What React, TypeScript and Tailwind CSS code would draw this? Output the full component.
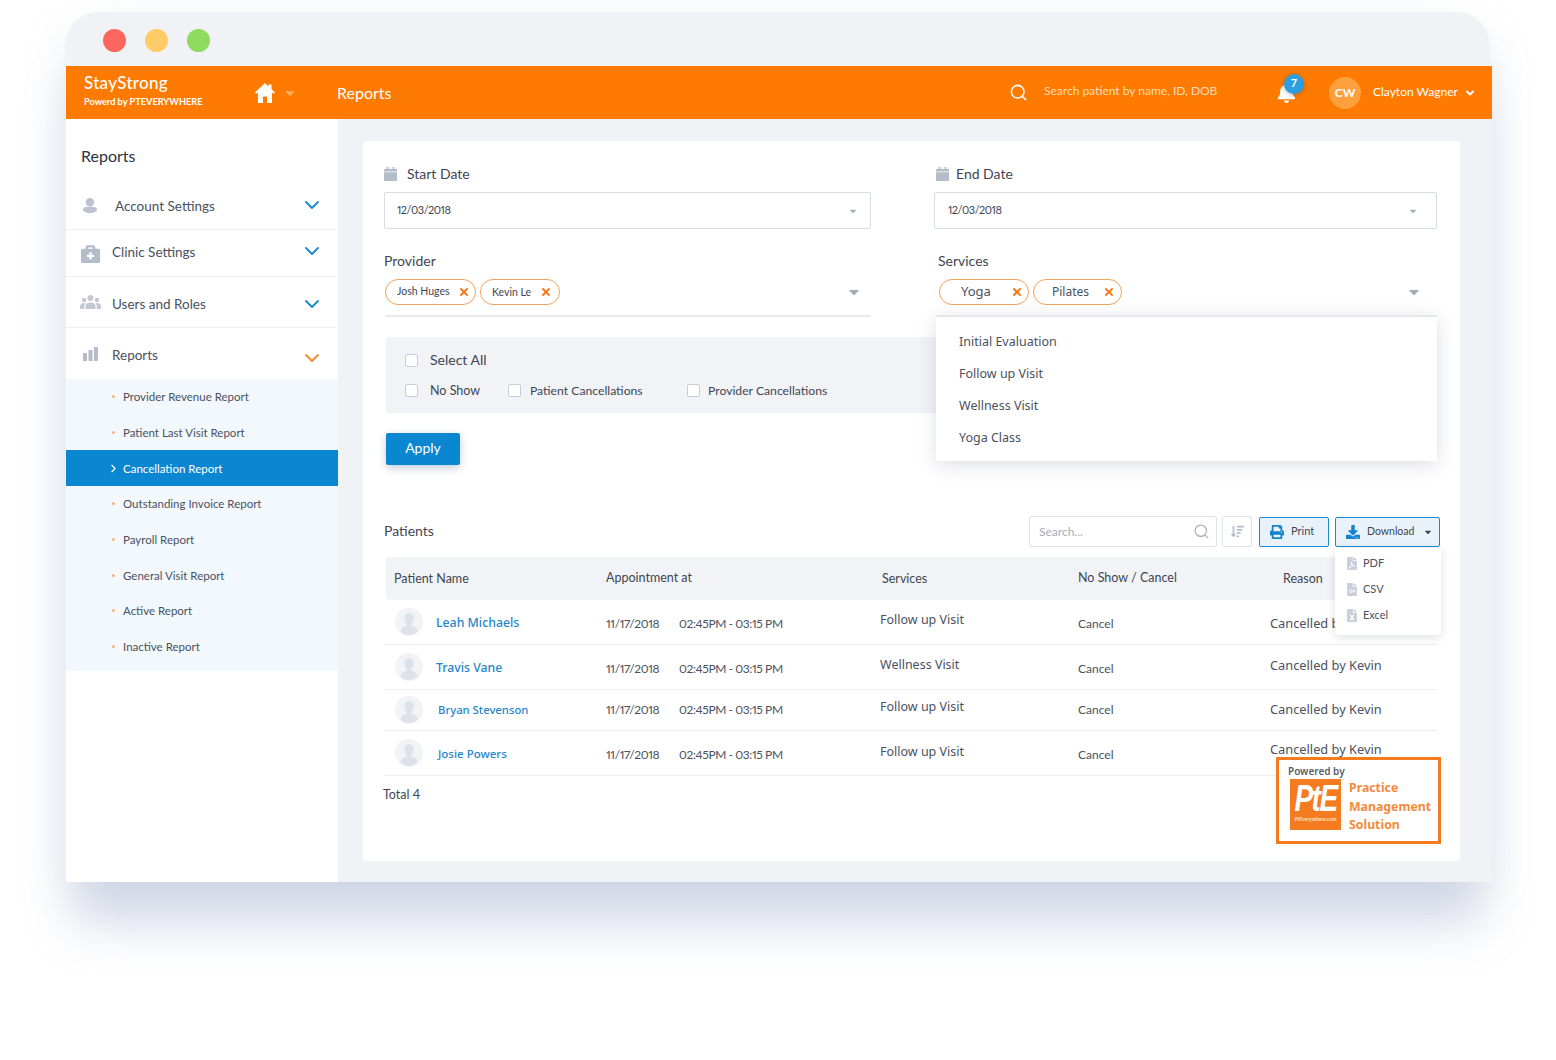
import { Search, ChevronDown, ChevronRight, X } from 'lucide-react'
import {
  FaBriefcaseMedical, FaPrint, FaDownload,
  FaFilePdf, FaFileCsv, FaFileExcel, FaBell, FaCaretDown, FaSortAmountDown,
} from 'react-icons/fa'

const sans = 'font-["Lato","Noto_Sans",sans-serif] [font-variant-numeric:proportional-nums]'
const round = 'font-["Noto_Sans","Open_Sans",sans-serif]'

const subItems = [
  'Provider Revenue Report',
  'Patient Last Visit Report',
  'Cancellation Report',
  'Outstanding Invoice Report',
  'Payroll Report',
  'General Visit Report',
  'Active Report',
  'Inactive Report',
]

// cell nudges: the rows in the picture don't share one baseline
const patients = [
  { name: 'Leah Michaels', service: 'Follow up Visit', h: 'h-[45px]', nameClass: 'ml-[13px] mt-[2px] text-[12.300px]', date: 'mt-[3px]', cancel: 'mt-[4px]', svc: 'mb-[3px]', reason: 'mt-[3px]' },
  { name: 'Travis Vane', service: 'Wellness Visit', h: 'h-[45px]', nameClass: 'ml-[13px] mt-[2px] text-[12.300px]', date: 'mt-[3px]', cancel: 'mt-[4px]', svc: 'mb-[3px]', reason: 'mb-[3px]' },
  { name: 'Bryan Stevenson', service: 'Follow up Visit', h: 'h-[41px]', nameClass: 'ml-[15px] text-[11.300px]', date: 'mb-[1px]', cancel: '', svc: 'mb-[5px]', reason: 'mb-[1px]' },
  { name: 'Josie Powers', service: 'Follow up Visit', h: 'h-[45px]', nameClass: 'ml-[15px] mt-[2px] text-[11.500px]', date: 'mt-[3px]', cancel: 'mt-[4px]', svc: 'mb-[2px]', reason: 'mb-[6px]' },
]

function BarsIcon() {
  return (
    <svg width="15" height="14" viewBox="0 0 15 14" fill="#b4bcc9">
      <rect x="0" y="6" width="4" height="8" />
      <rect x="5.5" y="3" width="4" height="11" />
      <rect x="11" y="0" width="4" height="14" />
    </svg>
  )
}

function UserIcon() {
  return (
    <svg width="14" height="15" viewBox="0 0 14 15" fill="#bcc3cf">
      <circle cx="7" cy="4.200" r="4.200" />
      <path d="M0 11.500C0 9.500 3 8.800 7 8.800s7 .7 7 2.700c0 2.200-3 3.500-7 3.500s-7-1.300-7-3.500z" />
    </svg>
  )
}

function UsersIcon() {
  return (
    <svg width="21" height="14" viewBox="0 0 21 14" fill="#c3c9d4">
      <circle cx="10.500" cy="3" r="3" />
      <circle cx="4" cy="5" r="2.200" />
      <circle cx="17" cy="5" r="2.200" />
      <path d="M5.500 14v-3c0-2.300 2-3.500 5-3.500s5 1.200 5 3.500v3z" />
      <path d="M0 14v-2.500C0 9.500 1.800 8 4 8c.6 0 1.100.1 1.500.3C4.700 9 4.300 10 4.300 11v3z" />
      <path d="M21 14v-2.500C21 9.500 19.200 8 17 8c-.6 0-1.100.1-1.500.3.800.7 1.200 1.700 1.200 2.700v3z" />
    </svg>
  )
}

function CalendarIcon() {
  return (
    <svg width="13" height="14" viewBox="0 0 13 14" fill="#b4bcc9">
      <rect x="2.500" y="0" width="2" height="3" />
      <rect x="8.500" y="0" width="2" height="3" />
      <path d="M0 2h13v2.500H0z" />
      <path d="M0 5.200h13V14H0z" />
    </svg>
  )
}

function HomeIcon() {
  return (
    <svg width="20" height="20" viewBox="0 0 20 20" fill="white">
      <path d="M10 0 0 9.500l1.200 1.300L3 9.200V20h5v-6.500h4V20h5V9.200l1.800 1.600L20 9.500 16.500 6.200V1.500h-3v1.900z" />
    </svg>
  )
}

function AvatarIcon() {
  return (
    <div className="h-[28px] w-[28px] shrink-0 overflow-hidden rounded-full bg-[#f1f3f7]">
      <svg width="28" height="28" viewBox="0 0 28 28" fill="#dde1ea">
        <path d="M14 5c-3 0-4.600 2.300-4.600 5.200 0 2.300 1 4.300 2.300 5.400v1.900c-2.500 1-5.700 2.200-6.200 5.500 2 2.500 5 4 8.500 4s6.500-1.500 8.500-4c-.5-3.300-3.700-4.500-6.200-5.500v-1.900c1.300-1.100 2.300-3.100 2.300-5.400C18.600 7.300 17 5 14 5z" />
      </svg>
    </div>
  )
}

function Tag({ label, className, textClass, xClass }: { label: string; className: string; textClass: string; xClass: string }) {
  return (
    <div className={`flex h-[26px] items-center rounded-full border border-[#f3a25b] bg-white ${className}`}>
      <span className={textClass}>{label}</span>
      <X className={`ml-auto h-[12px] w-[12px] text-[#f47a1c] ${xClass}`} strokeWidth={4} />
    </div>
  )
}

function Check({ label, className, labelClass }: { label: string; className?: string; labelClass: string }) {
  return (
    <div className={`flex h-[18px] items-center ${className ?? ''}`}>
      <div className="h-[13px] w-[13px] rounded-[2px] border border-[#c9ced6] bg-white" />
      <span className={`text-[#3f4653] ${labelClass}`}>{label}</span>
    </div>
  )
}

function MenuRow({ icon, label, className, textClass, chevronClass }: {
  icon: React.ReactNode
  label: string
  className: string
  textClass: string
  chevronClass: string
}) {
  return (
    <div className={`flex items-center ${className}`}>
      {icon}
      <span className={`text-[13.500px] text-[#4a5160] ${textClass}`}>{label}</span>
      <ChevronDown className={`ml-auto mr-[14px] h-[24px] w-[24px] ${chevronClass}`} strokeWidth={1.900} />
    </div>
  )
}

function Sidebar() {
  return (
    <aside className="w-[272px] shrink-0 bg-white">
      <h2 className="ml-[15px] h-[63px] pt-[27px] text-[16px] leading-[20px] text-[#2d3340]">Reports</h2>
      <MenuRow
        icon={<UserIcon />}
        label="Account Settings"
        className="h-[48px] border-b border-[#eef0f3] pl-[17px]"
        textClass="ml-[18px] mt-[1px]"
        chevronClass="mb-[2px] text-[#1c8ad1]"
      />
      <MenuRow
        icon={<FaBriefcaseMedical className="h-[19px] w-[19px] text-[#b4bcc9]" />}
        label="Clinic Settings"
        className="h-[47px] border-b border-[#eef0f3] pl-[15px]"
        textClass="ml-[12px] mb-[1px]"
        chevronClass="mb-[4px] text-[#1c8ad1]"
      />
      <MenuRow
        icon={<UsersIcon />}
        label="Users and Roles"
        className="h-[51px] border-b border-[#eef0f3] pl-[14px]"
        textClass="ml-[11px] mt-[5px]"
        chevronClass="mt-[3px] text-[#1c8ad1]"
      />
      <MenuRow
        icon={<BarsIcon />}
        label="Reports"
        className="h-[51px] pl-[17px]"
        textClass="ml-[14px] mt-[3px]"
        chevronClass="mt-[8px] text-[#f28a30]"
      />
      <div className="bg-[#f2f8fc] pb-[6px]">
        {subItems.map((item) => {
          const active = item === 'Cancellation Report'
          return (
            <div
              key={item}
              className={`flex h-[35.7px] items-center pl-[43px] text-[11.500px] ${active ? 'bg-[#0a87d0] text-white' : 'text-[#4a5160]'}`}
            >
              <span className="flex w-[14px] items-center">
                {active
                  ? <ChevronRight className="ml-[-2px] h-[13px] w-[13px]" strokeWidth={2} />
                  : <span className="ml-[3px] h-[3px] w-[3px] rounded-full bg-[#f6b183]" />}
              </span>
              {item}
            </div>
          )
        })}
      </div>
    </aside>
  )
}

function Filters() {
  return (
    <>
      <div className="grid grid-cols-[487px_503px] gap-x-[63px]">
        <div>
          <div className="flex h-[18px] items-center text-[14px] text-[#3f4653]">
            <CalendarIcon />
            <span className="mb-[2px] ml-[10px]">Start Date</span>
          </div>
          <div className="mt-[9px] flex h-[37px] items-center rounded-[2px] border border-[#d8dce3] bg-white px-[12px] text-[11px] tracking-[-0.5px] text-[#3f4653]">
            12/03/2018
            <FaCaretDown className="ml-auto h-[10px] w-[10px] text-[#a4abb7]" />
          </div>
        </div>
        <div>
          <div className="flex h-[18px] items-center pl-[2px] text-[14px] text-[#3f4653]">
            <CalendarIcon />
            <span className="mb-[2px] ml-[7px]">End Date</span>
          </div>
          <div className="mt-[9px] flex h-[37px] items-center rounded-[2px] border border-[#d8dce3] bg-white px-[13px] text-[11px] tracking-[-0.5px] text-[#3f4653]">
            12/03/2018
            <FaCaretDown className="ml-auto mr-[5px] h-[10px] w-[10px] text-[#a4abb7]" />
          </div>
        </div>
        <div className="mt-[23px]">
          <div className="h-[18px] text-[14px] leading-[18px] text-[#3f4653]">Provider</div>
          <div className="ml-[1px] mt-[9px] flex h-[38px] items-start gap-[4px] border-b-2 border-[#e8eaee]">
            <Tag label="Josh Huges" className="w-[91px] pl-[11px]" textClass="text-[10.500px] text-[#3f4653]" xClass="mr-[5px]" />
            <Tag label="Kevin Le" className="w-[80px] pl-[11px]" textClass="mt-[1px] text-[10.500px] text-[#3f4653]" xClass="mr-[7px]" />
            <FaCaretDown className="ml-auto mr-[9px] mt-[5px] h-[16px] w-[16px] text-[#a4abb7]" />
          </div>
        </div>
        <div className="relative mt-[23px]">
          <div className="h-[18px] pl-[4px] text-[14px] leading-[18px] text-[#3f4653]">Services</div>
          <div className="ml-[5px] mt-[9px] flex h-[38px] items-start gap-[4px]">
            <Tag label="Yoga" className="w-[90px] pl-[21px]" textClass={`${round} text-[13px] text-[#4a5160]`} xClass="mr-[5px]" />
            <Tag label="Pilates" className="w-[89px] pl-[18px]" textClass={`${round} text-[12px] text-[#4a5160]`} xClass="mr-[6px]" />
            <FaCaretDown className="ml-auto mr-[15px] mt-[5px] h-[16px] w-[16px] text-[#a4abb7]" />
          </div>
          {/* services dropdown hangs over the checkbox panel */}
          <div className={`absolute left-[2px] top-[63px] z-10 h-[146px] w-[501px] border-t-2 border-[#e4e6eb] bg-white pt-[9px] text-[12.500px] text-[#4a5160] shadow-[0_4px_18px_rgba(70,80,110,0.18)] ${round}`}>
            {['Initial Evaluation', 'Follow up Visit', 'Wellness Visit', 'Yoga Class'].map((s) => (
              <div key={s} className="flex h-[32px] items-center pl-[23px]">{s}</div>
            ))}
          </div>
        </div>
      </div>

      <div className="ml-[2px] mt-[20px] h-[76px] w-[1051px] rounded-[3px] bg-[#f1f3f6] pl-[19px] pt-[14px]">
        <Check label="Select All" labelClass="mb-[2px] ml-[12px] text-[14px]" />
        <div className="mt-[12px] flex items-center">
          <Check label="No Show" className="w-[103px]" labelClass="mt-[2px] ml-[12px] text-[12.500px]" />
          <Check label="Patient Cancellations" className="w-[179px]" labelClass="mt-[2px] ml-[9px] text-[12.200px]" />
          <Check label="Provider Cancellations" labelClass="mt-[2px] ml-[8px] text-[12.200px]" />
        </div>
      </div>

      <button className="ml-[2px] mt-[20px] h-[32px] w-[74px] rounded-[2px] bg-[#0a87d0] pb-[3px] text-[14px] text-white shadow-[0_3px_8px_rgba(60,90,130,0.3)]">
        Apply
      </button>
    </>
  )
}

function Toolbar() {
  return (
    <div className="mr-[-3px] mt-[51px] flex h-[31px] items-center">
      <h3 className="mb-[2px] text-[14px] text-[#3f4653]">Patients</h3>
      <div className="ml-auto flex h-[31px] w-[188px] items-center rounded-[2px] border border-[#dfe2e8] pl-[9px] text-[12px] text-[#a6adb9]">
        Search...
        <Search className="ml-auto mr-[6px] h-[17px] w-[17px] text-[#a9b0bb]" strokeWidth={1.700} />
      </div>
      <div className="ml-[5px] flex h-[31px] w-[30px] items-center justify-center rounded-[2px] border border-[#dfe2e8]">
        <FaSortAmountDown className="h-[13px] w-[13px] text-[#b4bcc9]" />
      </div>
      <button className="ml-[7px] flex h-[30px] w-[70px] items-center rounded-[2px] border border-[#1c8ad1] bg-[#e9f2f9] pl-[10px] text-[11px] text-[#3f4653]">
        <FaPrint className="h-[14px] w-[14px] text-[#1583cc]" />
        <span className="ml-[7px]">Print</span>
      </button>
      <div className="relative ml-[6px]">
        <button className="flex h-[30px] w-[105px] items-center rounded-[2px] border border-[#1c8ad1] bg-[#e9f2f9] pl-[10px] text-[10.500px] text-[#3f4653]">
          <FaDownload className="h-[14px] w-[14px] text-[#1583cc]" />
          <span className="ml-[7px]">Download</span>
          <FaCaretDown className="ml-auto mr-[6px] h-[10px] w-[10px] text-[#3f4653]" />
        </button>
        <div className="absolute left-0 top-[31px] z-10 h-[87px] w-[106px] rounded-[3px] bg-white pl-[12px] pt-[3px] text-[11px] text-[#4a5160] shadow-[0_2px_10px_rgba(70,80,110,0.18)]">
          <div className="flex h-[26px] items-center"><FaFilePdf className="h-[13px] w-[10px] text-[#c9ced8]" /><span className="ml-[6px]">PDF</span></div>
          <div className="flex h-[26px] items-center"><FaFileCsv className="h-[13px] w-[10px] text-[#c9ced8]" /><span className="ml-[6px]">CSV</span></div>
          <div className="flex h-[26px] items-center"><FaFileExcel className="h-[13px] w-[10px] text-[#c9ced8]" /><span className="ml-[6px]">Excel</span></div>
        </div>
      </div>
    </div>
  )
}

function PatientsTable() {
  return (
    <>
      <div className="ml-[2px] mt-[10px] flex h-[43px] items-center rounded-[3px] bg-[#f1f3f6] pl-[8px] text-[12.500px] text-[#3f4653]">
        <span className="mt-[2px] w-[212px]">Patient Name</span>
        <span className="w-[276px]">Appointment at</span>
        <span className="mt-[2px] w-[196px]">Services</span>
        <span className="w-[205px]">No Show / Cancel</span>
        <span className="mt-[2px]">Reason</span>
      </div>
      {patients.map((p) => (
        <div key={p.name} className={`flex items-center border-b border-[#eceef1] pl-[11px] text-[12px] text-[#4a5160] ${p.h}`}>
          <div className="flex w-[211px] items-center">
            <AvatarIcon />
            <span className={`${round} font-medium text-[#1f86c9] ${p.nameClass}`}>{p.name}</span>
          </div>
          <span className={`w-[73px] tracking-[-0.4px] ${p.date}`}>11/17/2018</span>
          <span className={`w-[201px] tracking-[-0.4px] ${p.date}`}>02:45PM - 03:15 PM</span>
          <span className={`${round} w-[198px] text-[12.500px] text-[#4a5160] ${p.svc}`}>{p.service}</span>
          <span className={`w-[192px] ${p.cancel}`}>Cancel</span>
          <span className={`${round} text-[12.800px] text-[#4a5160] ${p.reason}`}>Cancelled by Kevin</span>
        </div>
      ))}
      <div className="ml-[-1px] mt-[11px] text-[12.500px] leading-[16px] text-[#3f4653]">Total 4</div>
    </>
  )
}

function PoweredBy() {
  return (
    <div className="absolute bottom-[17px] right-[19px] z-20 h-[87px] w-[165px] border-[3px] border-[#f47b20] bg-white pl-[9px] pt-[5px]">
      <div className={`${round} text-[10px] font-semibold leading-[12px] text-[#5a5f68]`}>Powered by</div>
      <div className="ml-[2px] mt-[2px] flex">
        <div className="flex h-[51px] w-[51px] flex-col items-center overflow-hidden bg-[#f47b20]">
          <span className='mt-[4px] scale-y-[1.300] font-["Liberation_Sans",sans-serif] text-[28px] font-bold italic leading-[32px] tracking-[-1.500px] text-white'>PtE</span>
          <span className="mt-[1px] text-[5px] font-bold leading-[6px] text-[#ffe3cc]">PtEverywhere.com</span>
        </div>
        <div className={`${round} ml-[8px] text-[12.300px] font-bold leading-[18.500px] text-[#f58a3c]`}>
          <div>Practice</div>
          <div>Management</div>
          <div>Solution</div>
        </div>
      </div>
    </div>
  )
}

export default function App() {
  return (
    <div className={`${sans} min-h-[1060px] overflow-hidden bg-white pl-[65px] pt-[12px]`}>
      <div className="w-[1425px] rounded-t-[34px] bg-[#f0f2f5] shadow-[0_50px_50px_-8px_rgba(130,145,185,0.33),0_10px_45px_rgba(150,160,195,0.13)]">
        <div className="flex h-[54px] items-center gap-[19px] pl-[38px] pt-[2px]">
          <span className="h-[23px] w-[23px] rounded-full bg-[#ff6660]" />
          <span className="h-[23px] w-[23px] rounded-full bg-[#ffcb66]" />
          <span className="h-[23px] w-[23px] rounded-full bg-[#8ddc5f]" />
        </div>

        <header className="ml-[1px] flex h-[53px] w-[1426px] items-center bg-[#ff7a00] pl-[18px] pr-[16px] text-white">
          <div className="w-[171px] pb-[4px]">
            <div className="text-[17px] font-medium leading-[20px] tracking-[0.3px]">StayStrong</div>
            <div className="mt-[3px] text-[9.200px] font-bold leading-[12px]">Powerd by PTEVERYWHERE</div>
          </div>
          <HomeIcon />
          <FaCaretDown className="ml-[8px] h-[14px] w-[14px] text-[#ffb066]" />
          <span className="ml-[40px] text-[16px]">Reports</span>
          <Search className="ml-auto h-[19px] w-[19px]" strokeWidth={2} />
          <span className="mb-[3px] ml-[16px] w-[233px] text-[12px] text-[#ffdcb8]">Search patient by name, ID, DOB</span>
          <div className="relative">
            <FaBell className="h-[20px] w-[19px]" />
            <span className="absolute -right-[8px] -top-[9px] flex h-[20px] w-[20px] items-center justify-center rounded-full bg-[#2c9fe2] text-[11px] font-bold shadow-[0_1px_4px_rgba(60,60,60,0.4)]">7</span>
          </div>
          <div className="ml-[33px] flex h-[32px] w-[32px] items-center justify-center rounded-full bg-[#ffa03f] text-[12px] font-bold">CW</div>
          <span className="mb-[1px] ml-[12px] w-[83px] whitespace-nowrap text-[12px]">Clayton Wagner</span>
          <ChevronDown className="ml-[8px] h-[12px] w-[12px]" strokeWidth={4} />
        </header>

        <div className="ml-[1px] flex h-[763px] w-[1426px] bg-[#f0f2f5]">
          <Sidebar />
          <main className="flex-1 pl-[25px] pt-[22px]">
            <div className="relative h-[720px] w-[1097px] rounded-[4px] bg-white pl-[21px] pr-[23px] pt-[24px]">
              <Filters />
              <Toolbar />
              <PatientsTable />
              <PoweredBy />
            </div>
          </main>
        </div>
      </div>
    </div>
  )
}
